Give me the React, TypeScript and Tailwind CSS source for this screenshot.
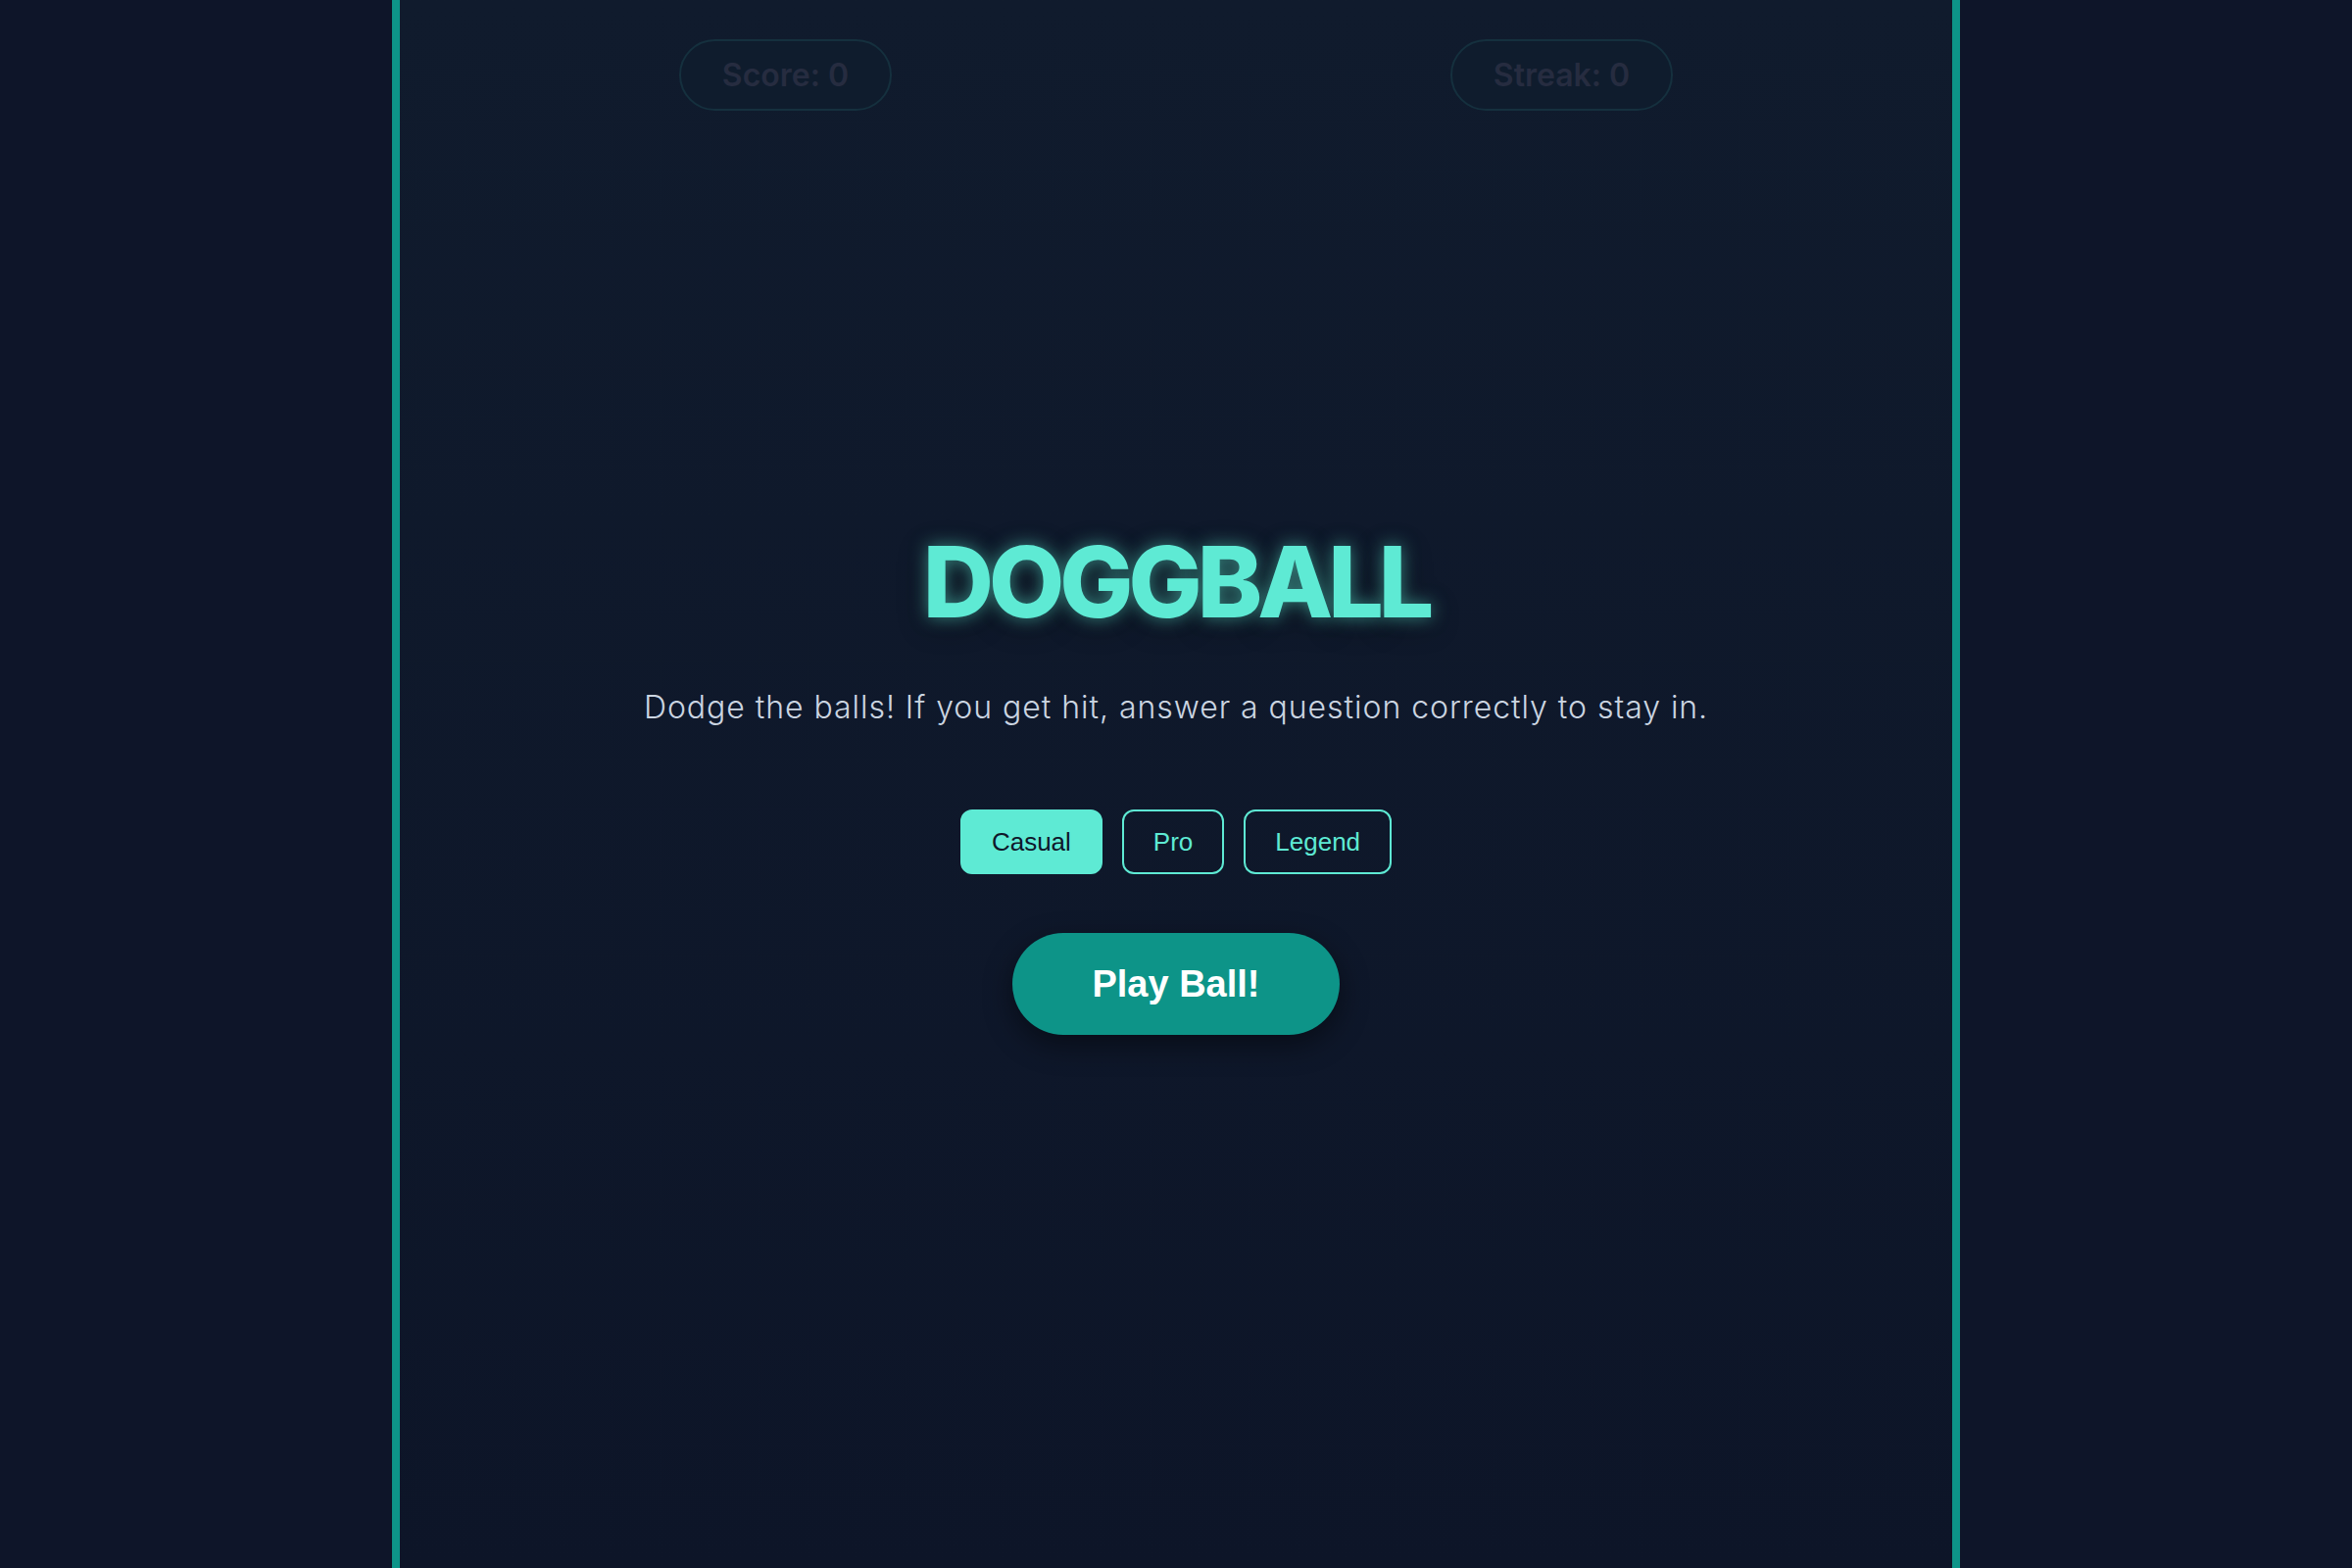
import React from "react";

export default function App() {
  const poppinsLike = "font-['Inter','Noto_Sans',sans-serif]";
  return (
    <div className="min-h-screen w-full bg-[#0e1529]">
      <div className="relative mx-auto flex min-h-screen w-[1600px] flex-col border-x-8 border-[#0d9488] bg-gradient-to-b from-[#101b2d] to-[#0d1528]">
        <header className={`flex justify-around pt-[40px] ${poppinsLike}`}>
          <div className="rounded-full border-2 border-[#15303e] bg-[#0f1c2d] px-[42px] py-[10px] text-[32px] font-semibold leading-[49px] text-[#262c40]">
            Score: 0
          </div>
          <div className="rounded-full border-2 border-[#15303e] bg-[#0f1c2d] px-[42px] py-[10px] text-[32px] font-semibold leading-[49px] text-[#262c40]">
            Streak: 0
          </div>
        </header>

        <div className="absolute inset-0 flex items-center justify-center">
          <div className="flex flex-col items-center">
            <h1
              className={`${poppinsLike} text-[100px] font-extrabold leading-none tracking-[-0.05em] text-[#5eead4] [text-shadow:0_0_18px_rgba(94,234,212,0.55),0_6px_30px_rgba(0,0,0,0.45)]`}
            >
              DOGGBALL
            </h1>
            <p
              className={`${poppinsLike} mt-[54px] text-[32px] font-light leading-[48px] tracking-[0.03em] text-[#cbd5e1]`}
            >
              Dodge the balls! If you get hit, answer a question correctly to stay in.
            </p>
            <div className="mt-[80px] flex gap-5 font-['Liberation_Sans','Arial',sans-serif] text-[26px] leading-[30px]">
              <button className="rounded-xl border-2 border-[#5eead4] bg-[#5eead4] px-[30px] py-[16px] text-[#0f172a]">
                Casual
              </button>
              <button className="rounded-xl border-2 border-[#5eead4] bg-transparent px-[30px] py-[16px] text-[#5eead4]">
                Pro
              </button>
              <button className="rounded-xl border-2 border-[#5eead4] bg-transparent px-[30px] py-[16px] text-[#5eead4]">
                Legend
              </button>
            </div>
            <button className="mt-[60px] rounded-full bg-[#0d9488] px-[81px] py-[30px] font-['Liberation_Sans','Arial',sans-serif] text-[38px] font-bold leading-[44px] text-white shadow-[0_10px_30px_rgba(0,0,0,0.45)]">
              Play Ball!
            </button>
          </div>
        </div>
      </div>
    </div>
  );
}
